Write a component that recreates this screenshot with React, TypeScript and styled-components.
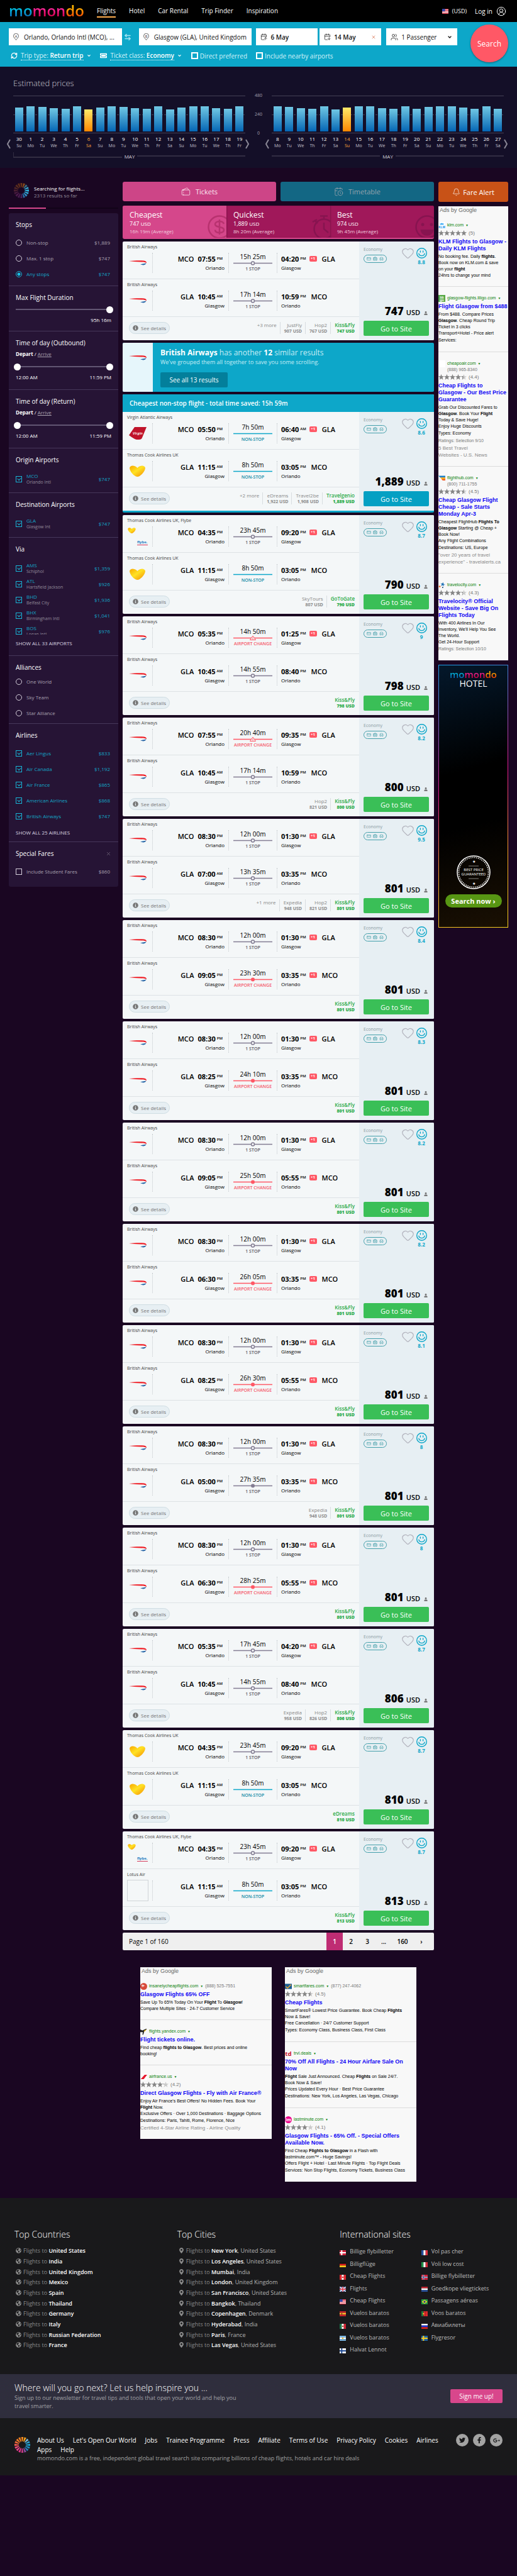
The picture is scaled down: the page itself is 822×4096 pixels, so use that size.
import React from "react";
import styled, { createGlobalStyle, css } from "styled-components";
import {
  ArrowLeftRight, Bell, CalendarArrowUp, CalendarArrowDown, CalendarClock, ChevronDown, Heart, RefreshCw,
  Tickets as TicketsIcon, Users, X, CircleUserRound, CreditCard, BriefcaseMedical, Armchair,
} from "lucide-react";
import {
  FaFacebookF, FaGlobeAmericas, FaGooglePlusG, FaInfoCircle, FaMapMarkerAlt, FaTicketAlt, FaTwitter, FaUser, FaPlane,
} from "react-icons/fa";

const sans = `"Open Sans", "Noto Sans", sans-serif`;
const arial = `"Liberation Sans", Arial, sans-serif`;

const GlobalStyle = createGlobalStyle`
  * { box-sizing: border-box; }
  body { margin: 0; background: #1a0622; font-family: ${sans}; font-size: 10px; color: #fff; }
  h1, h2, h3, p, ul { margin: 0; padding: 0; font-weight: 400; }
  ul { list-style: none; }
  a { color: inherit; text-decoration: none; }
  button, input, select { font-family: inherit; color: inherit; margin: 0; padding: 0; border: 0; background: none; }
  button { cursor: pointer; }
  svg { display: block; flex: none; }
`;

/* ---------- header ---------- */

const Header = styled.header`
  height: 35px;
  padding: 0 17px 0 14px;
  display: flex;
  background: #000;
`;
const Logo = styled.a`
  width: 120px;
  margin-right: 20px;
  font-size: 24px;
  line-height: 33px;
  font-weight: 600;
  display: flex;
`;
const LogoPart = styled.span<{ $from: string; $to: string }>`
  background: linear-gradient(${(p) => p.$from} 35%, ${(p) => p.$to} 75%);
  background-clip: text;
  -webkit-background-clip: text;
  color: transparent;
`;
const Nav = styled.nav`
  display: flex;
  gap: 21px;
  flex: 1;
`;
const NavLink = styled.a<{ $active?: boolean }>`
  height: 28px;
  padding-top: 10px;
  line-height: 14px;
  font-size: 10px;
  border-bottom: 2px solid ${(p) => (p.$active ? "#ffad4e" : "transparent")};
`;
const HeaderTools = styled.div`
  display: flex;
  align-items: center;
  gap: 6px;
`;
const Currency = styled.span`
  font-size: 9px;
  margin-right: 7px;
`;

/* ---------- search ---------- */

const SearchForm = styled.form`
  height: 71px;
  padding: 4px 14px 0;
  display: flex;
  gap: 21px;
  background: #0da7c9;
`;
const SearchMain = styled.div`
  flex: 1;
  padding-top: 6px;
`;
const Fields = styled.div`
  display: grid;
  grid-template-columns: 180fr 27px 180fr 7px 98fr 3px 98fr 8px 113fr;
`;
const Field = styled.label`
  height: 27px;
  padding: 0 8px 0 7px;
  display: flex;
  align-items: center;
  gap: 5px;
  background: #fff;
  color: #111;
  input, select { flex: 1; min-width: 0; width: 100%; font-size: 10px; appearance: none; outline: 0; }
`;
const PlaceField = styled(Field)`
  gap: 8px;
`;
const DateField = styled(Field)`
  input { font-weight: 600; }
`;
const Swap = styled.button`
  padding-left: 3px;
  color: #a5e3f2;
`;
const Options = styled.div`
  margin-top: 9px;
  padding-left: 3px;
  height: 15px;
  display: flex;
  align-items: center;
  font-size: 10px;
`;
const OptionPick = styled.label`
  margin: 0 5px 0 5px;
  line-height: 14px;
  color: #d6f3fa;
  border-bottom: 1px dotted #fff;
  select { appearance: none; font-size: 10px; font-weight: 600; color: #fff; outline: 0; }
`;
const OptionIcon = styled.span`
  margin-right: 14px;
`;
const OptionCheck = styled.label`
  margin-left: 1px;
  margin-right: 13px;
  display: flex;
  align-items: center;
  gap: 3px;
  color: #d6f3fa;
  input { appearance: none; width: 11px; height: 11px; border: 2px solid #fff; }
`;
const SearchButton = styled.button`
  width: 60px;
  height: 60px;
  border-radius: 50%;
  background: #ff5866;
  font-size: 12px;
  box-shadow: 0 1px 3px rgba(0, 0, 0, 0.4);
`;

/* ---------- price chart ---------- */

const ChartSection = styled.section`
  padding: 16px 10px 13px;
  background: #140f28;
`;
const ChartTitle = styled.h2`
  margin: 0 11px 10px;
  font-size: 13px;
  line-height: 20px;
  font-weight: 300;
  color: #c9c6cf;
`;
const Charts = styled.div`
  display: grid;
  grid-template-columns: 1fr 20px 1fr;
`;
const ChartPanel = styled.div`
  display: grid;
  grid-template-columns: 11px 1fr 11px;
`;
const Plot = styled.div`
  grid-column: 1 / -1;
  margin: 0 11px;
  height: 60px;
  padding-bottom: 2px;
  display: flex;
  align-items: flex-end;
  border-top: 1px solid #454155;
  border-bottom: 1px solid #454155;
  background: repeating-linear-gradient(90deg, #454155 0 3px, transparent 3px 5px) 0 29px / 100% 1px no-repeat;
`;
const BarSlot = styled.div`
  flex: 1;
  display: flex;
  justify-content: center;
`;
const Bar = styled.div<{ $on: boolean }>`
  width: 13px;
  background: ${(p) => (p.$on ? "linear-gradient(#ffe969, #ff8600)" : "linear-gradient(#70c7e4, #0566b4)")};
`;
const DayRow = styled.ul`
  padding-top: 2px;
  display: flex;
`;
const Day = styled.li<{ $on: boolean }>`
  flex: 1;
  text-align: center;
  font-size: 8px;
  line-height: 13px;
  color: ${(p) => (p.$on ? "#f9a33c" : "#fff")};
  small { display: block; font-size: 7px; line-height: 10px; color: ${(p) => (p.$on ? "#f9a33c" : "#c4c1cd")}; }
`;
const Arrow = styled.button`
  padding-top: 8px;
  color: #8b8896;
`;
const Month = styled.div<{ $tick?: boolean }>`
  grid-column: 2;
  margin-top: 5px;
  height: 12px;
  display: flex;
  align-items: center;
  gap: 4px;
  font-size: 8px;
  color: #d6d3dc;
  &::before, &::after { content: ""; flex: 1; height: 2px; background: #322d42; }
  ${(p) => p.$tick && css`&::before { height: 7px; margin-bottom: 4px; background: none; border-left: 1px solid #322d42; border-bottom: 2px solid #322d42; }`}
`;
const Axis = styled.div`
  height: 70px;
  margin-top: -5px;
  display: flex;
  flex-direction: column;
  justify-content: space-between;
  text-align: center;
  font-size: 7px;
  line-height: 10px;
  color: #a5a1ae;
`;

/* ---------- page columns ---------- */

const Columns = styled.main`
  padding: 22px 14px 0;
  display: grid;
  grid-template-columns: 174px 1fr 111px;
  gap: 7px;
  align-items: start;
`;

/* ---------- filters ---------- */

const Status = styled.div`
  height: 43px;
  padding: 2px 8px;
  display: flex;
  gap: 8px;
  font-size: 8px;
  line-height: 11px;
  p { padding-top: 3px; }
  small { display: block; font-size: 8px; color: #938b9a; }
`;
const Progress = styled.div`
  height: 2px;
  margin-bottom: 7px;
  margin-top: -2px;
  background: linear-gradient(90deg, #d4478a 34%, #120418 34%);
`;
const Panel = styled.div`
  border-radius: 3px;
  background: #261435;
`;
const Group = styled.section<{ $bottom: number }>`
  padding: 11px 11px ${(p) => p.$bottom}px;
  border-bottom: 1px solid #46375a;
  font-size: 8px;
  color: #a9a1b0;
  &:last-child { border-bottom: 0; }
`;
const GroupTitle = styled.h3<{ $gap: number }>`
  display: flex;
  justify-content: space-between;
  align-items: center;
  font-size: 10px;
  line-height: 14px;
  color: #fff;
  margin-bottom: ${(p) => p.$gap}px;
  svg { color: #8a8292; }
`;
const Choice = styled.label<{ $on?: boolean }>`
  height: 25px;
  padding-right: 2px;
  display: flex;
  align-items: center;
  gap: 7px;
  color: ${(p) => (p.$on ? "#14a5c6" : "#a9a1b0")};
  input { appearance: none; width: 10px; height: 10px; border: 1px solid #d5cfdb; position: relative; }
  input[type="radio"] { border-radius: 50%; }
  input:checked { border-color: #18b4d6; }
  input[type="radio"]:checked { background: radial-gradient(#18c0e4 0 2px, transparent 3px); }
  input[type="checkbox"]:checked::after {
    content: ""; position: absolute; left: 2px; top: 1px; width: 4px; height: 3px;
    border-left: 1px solid #18b4d6; border-bottom: 1px solid #18b4d6; transform: rotate(-45deg);
  }
`;
const ChoiceText = styled.span`
  flex: 1;
  line-height: 10px;
  white-space: nowrap;
  small { display: block; font-size: 7px; color: #938b9a; }
`;
const Clip = styled.div`
  height: 118px;
  overflow: hidden;
`;
const ShowAll = styled.button`
  display: block;
  margin-top: 8px;
  height: 12px;
  font-size: 8px;
  line-height: 12px;
  color: #dcd7e2;
`;
const DepartArrive = styled.p`
  line-height: 12px;
  margin-bottom: 8px;
  color: #fff;
  a { color: #a9a1b0; text-decoration: underline; }
`;
const Range = styled.div`
  height: 12px;
  margin: 0 -3px 5px;
  display: grid;
  background: linear-gradient(#625673, #625673) center / calc(100% - 6px) 2px no-repeat;
  input {
    grid-area: 1 / 1;
    width: 100%;
    appearance: none;
    pointer-events: none;
    &::-webkit-slider-thumb { appearance: none; width: 11px; height: 11px; border-radius: 50%; background: #fff; pointer-events: auto; }
  }
`;
const RangeLabels = styled.div<{ $end?: boolean }>`
  display: flex;
  justify-content: ${(p) => (p.$end ? "flex-end" : "space-between")};
  line-height: 12px;
  color: #fff;
`;

/* ---------- results ---------- */

const TabRow = styled.div`
  display: grid;
  grid-template-columns: 1fr 1fr;
  gap: 7px;
  margin-bottom: 7px;
`;
const Tab = styled.button<{ $bg: string; $color: string }>`
  height: 31px;
  display: flex;
  align-items: center;
  justify-content: center;
  gap: 8px;
  border-radius: 3px;
  font-size: 11px;
  background: ${(p) => p.$bg};
  color: ${(p) => p.$color};
`;
const SortRow = styled.div`
  height: 53px;
  display: grid;
  grid-template-columns: 1fr 1fr 1fr;
  border-radius: 3px;
  overflow: hidden;
  margin-bottom: 4px;
  background: #a0185a;
  border-bottom: 2px solid #d5478b;
`;
const SortTab = styled.button<{ $on?: boolean }>`
  position: relative;
  overflow: hidden;
  padding: 6px 11px 5px;
  text-align: left;
  font-size: 8px;
  line-height: 12px;
  color: #f0cddf;
  background: ${(p) => (p.$on ? "#d5478b" : "#a0185a")};
  box-shadow: inset 1px 0 2px ${(p) => (p.$on ? "#d5478b" : "#82134a")};
  h3 { font-size: 12px; line-height: 17px; color: #fff; }
  p { font-size: 9px; line-height: 12px; color: #fff; }
  p small { font-size: 8px; }
  > svg { position: absolute; right: -8px; top: 15px; }
`;
const Card = styled.article<{ $accent?: boolean }>`
  margin-bottom: 4px;
  display: grid;
  grid-template-columns: 1fr 119px;
  border-radius: 2px;
  overflow: hidden;
  background: #f4f7f8;
  color: #000;
  border-bottom: ${(p) => (p.$accent ? "3px solid #0da7c9" : "0")};
`;
const CardHead = styled.h2`
  grid-column: 1 / -1;
  height: 28px;
  padding-left: 11px;
  font-size: 10px;
  font-weight: 600;
  line-height: 28px;
  color: #fff;
  background: #0da7c9;
`;
const LegRow = styled.div`
  height: 60px;
  padding: 3px 0 9px;
  border-bottom: 1px solid #dde2e5;
`;
const Airline = styled.p`
  padding-left: 7px;
  margin-bottom: 4px;
  font-size: 7px;
  line-height: 11px;
  color: #444;
`;
const LegGrid = styled.div`
  height: 32px;
  display: grid;
  grid-template-columns: 48px 1fr 78px 130px;
`;
const LogoCell = styled.div`
  border-right: 1px dotted #c3c8cc;
  display: flex;
  justify-content: center;
  align-items: center;
  height: 32px;
`;
const Pair = styled.div`
  height: 28px;
  width: 32px;
  display: flex;
  flex-direction: column;
  justify-content: space-between;
`;
const Flybe = styled.span`
  align-self: flex-end;
  font: 700 6px/8px ${sans};
  color: #1e7cc0;
  border-bottom: 1px solid #d33a5c;
`;
const NoLogo = styled.div`
  width: 34px;
  height: 34px;
  border: 1px solid #cfd4d8;
`;
const End = styled.div<{ $right?: boolean }>`
  padding: ${(p) => (p.$right ? "0 6px 0 0" : "0 0 0 6px")};
  text-align: ${(p) => (p.$right ? "right" : "left")};
  font-size: 8px;
  line-height: 9px;
`;
const TimeLine = styled.div<{ $right?: boolean }>`
  height: 19px;
  display: flex;
  align-items: center;
  justify-content: ${(p) => (p.$right ? "flex-end" : "flex-start")};
  margin-right: ${(p) => (p.$right ? "3px" : "0")};
  font-size: 11px;
  line-height: 19px;
  b { margin-left: ${(p) => (p.$right ? "6px" : "0")}; }
  sup { font-size: 6px; line-height: 6px; font-weight: 600; margin: 0 0 2px 2px; vertical-align: 0; }
`;
const Code = styled.span<{ $after?: boolean }>`
  font-weight: 600;
  margin-left: ${(p) => (p.$after ? "8px" : "0")};
`;
const NextDay = styled.span`
  width: 12px;
  height: 9px;
  margin-left: 5px;
  border-radius: 2px;
  background: #ff5866;
  color: #fff;
  font-size: 6px;
  font-weight: 700;
  line-height: 9px;
  text-align: center;
`;
const Middle = styled.div<{ $color: string }>`
  padding: 0 7px;
  border-left: 1px dotted #c3c8cc;
  border-right: 1px dotted #c3c8cc;
  text-align: center;
  font-size: 10px;
  line-height: 12px;
  small { display: block; margin: 0 -4px; font-size: 7px; line-height: 9px; font-weight: 600; white-space: nowrap; color: ${(p) => p.$color}; }
`;
const CardFoot = styled.div`
  height: 37px;
  padding: 8px 7px 0 10px;
  display: flex;
`;
const Details = styled.button`
  width: 65px;
  height: 19px;
  display: flex;
  align-items: center;
  justify-content: center;
  gap: 4px;
  border: 1px solid #cfdde3;
  border-radius: 10px;
  background: #e7eff3;
  font-size: 8px;
  color: #777;
`;
const More = styled.span`
  margin-left: auto;
  font-size: 8px;
  line-height: 10px;
  color: #888;
`;
const Offer = styled.a<{ $best?: boolean; $first?: boolean }>`
  height: 19px;
  margin-left: 5px;
  padding-left: 6px;
  border-left: 1px solid ${(p) => (p.$first ? "transparent" : "#d8dde0")};
  text-align: right;
  font-size: 8px;
  line-height: 10px;
  font-weight: ${(p) => (p.$best ? 600 : 400)};
  color: ${(p) => (p.$best ? "#2bab49" : "#888")};
  b { display: block; font-size: 7px; }
`;
const Side = styled.div`
  padding: 8px 8px 7px 7px;
  display: flex;
  flex-direction: column;
  justify-content: space-between;
  background: #e7eff3;
`;
const SideTop = styled.div`
  display: grid;
  grid-template-columns: 1fr 20px 24px;
  font-size: 7px;
  line-height: 10px;
  color: #8b9ba3;
`;
const Perks = styled.div`
  width: 37px;
  height: 13px;
  margin-top: 3px;
  display: flex;
  justify-content: center;
  align-items: center;
  gap: 3px;
  border: 1px solid #45a0ab;
  border-radius: 7px;
  color: #45a0ab;
`;
const Score = styled.div`
  padding-top: 2px;
  display: flex;
  flex-direction: column;
  align-items: center;
  font-size: 8px;
  line-height: 12px;
  font-weight: 700;
  color: #0da7c9;
`;
const Price = styled.div`
  display: flex;
  justify-content: flex-end;
  align-items: baseline;
  gap: 4px;
  padding-right: 2px;
  font-size: 11px;
  line-height: 22px;
  font-weight: 600;
  b { font-size: 17px; }
  svg { margin-left: 2px; color: #777; }
`;
const GoButton = styled.button<{ $accent?: boolean }>`
  width: 100%;
  height: 24px;
  margin-top: 2px;
  border-radius: 2px;
  background: ${(p) => (p.$accent ? "#04a0c3" : "#3abf57")};
  color: #fff;
  font-size: 11px;
`;
const Banner = styled.section`
  height: 78px;
  margin-bottom: 4px;
  display: grid;
  grid-template-columns: 48px 1fr;
  border-radius: 2px;
  overflow: hidden;
  background: #0da7c9;
`;
const BannerLogo = styled.div`
  padding: 20px 10px;
  background: #e6f6fb;
`;
const BannerText = styled.div`
  padding: 7px 12px;
  font-size: 9px;
  line-height: 13px;
  color: #c8edf6;
  h3 { font-size: 12px; line-height: 17px; }
  b { color: #fff; }
`;
const BannerButton = styled.button`
  display: block;
  margin-top: 10px;
  width: 107px;
  height: 24px;
  border-radius: 2px;
  background: #037f9b;
  color: #fff;
  font-size: 10px;
`;
const Pager = styled.nav`
  height: 28px;
  padding: 0 7px 0 10px;
  display: flex;
  align-items: center;
  border-radius: 2px;
  background: #efefef;
  color: #000;
  font-size: 10px;
  span { flex: 1; }
`;
const PageLink = styled.a<{ $on?: boolean; $wide?: boolean }>`
  width: ${(p) => (p.$wide ? "34px" : "26px")};
  line-height: 28px;
  text-align: center;
  font-weight: 600;
  background: ${(p) => (p.$on ? "#bf2c73" : "none")};
  color: ${(p) => (p.$on ? "#fff" : "#000")};
`;

/* ---------- adverts ---------- */

const FareAlert = styled(Tab)`
  width: 100%;
  height: 32px;
  gap: 4px;
  margin-bottom: 7px;
`;
const AdBox = styled.aside`
  overflow: hidden;
  background: #f8f8f8;
  color: #000;
  font-family: ${arial};
  font-size: 7px;
  line-height: 10px;
`;
const AdsBy = styled.p`
  padding: 0 2px;
  font-size: 9px;
  line-height: 12px;
  color: #666;
`;
const Ad = styled.div`
  padding: 12px 0;
  white-space: nowrap;
  & + & { border-top: 1px solid #dcdcdc; }
`;
const AdUrl = styled.a`
  height: 12px;
  display: flex;
  align-items: center;
  gap: 3px;
  color: #0a820a;
  small { font-size: 5px; }
  em { font-style: normal; color: #777; }
`;
const AdPhone = styled.p`
  padding-left: 14px;
  margin-top: -1px;
  color: #777;
`;
const AdTitle = styled.a`
  display: block;
  margin: 2px 0;
  font-size: 9px;
  line-height: 11px;
  font-weight: 700;
  color: #1005f5;
`;
const AdExtra = styled.p`
  line-height: 12px;
`;
const AdRating = styled.p`
  line-height: 12px;
  color: #777;
`;
const AdQuote = styled.p`
  font-size: 8px;
  line-height: 11px;
  color: #888;
`;
const StarLine = styled.div`
  height: 13px;
  display: flex;
  align-items: center;
  gap: 3px;
  font-size: 8px;
  color: #777;
`;
const StarGroup = styled.span`
  display: flex;
`;
const AdPairRow = styled.div`
  padding: 27px 28px 26px;
  display: grid;
  grid-template-columns: 1fr 1fr;
  gap: 21px;
  align-items: start;
`;
const HotelAd = styled.a`
  margin-top: 7px;
  height: 418px;
  padding: 6px 9px 31px;
  display: flex;
  flex-direction: column;
  align-items: center;
  border: 1px solid;
  border-image: linear-gradient(160deg, #1aa0e8, #e01a8c 45%, #f7a823 75%, #f5d21f) 1;
  background: linear-gradient(165deg, #04182b, #000 40%, #000 60%, #1a1003);
  color: #fff;
`;
const HotelLogo = styled.div`
  display: flex;
  font-size: 15px;
  line-height: 16px;
  font-weight: 600;
`;
const HotelWord = styled.p`
  font-size: 14px;
  line-height: 14px;
  flex: 1;
`;
const SearchNow = styled.span`
  margin-top: 8px;
  width: 90px;
  height: 21px;
  border-radius: 11px;
  background: #579613;
  font-size: 11px;
  font-weight: 700;
  line-height: 21px;
  text-align: center;
`;

/* ---------- footer ---------- */

const Directory = styled.footer`
  padding: 48px 23px 30px;
  display: grid;
  grid-template-columns: 1fr 1fr 1fr;
  background: #19191b;
`;
const DirTitle = styled.h3`
  margin-bottom: 7px;
  font-size: 14px;
  line-height: 20px;
  font-weight: 300;
`;
const Place = styled.li`
  height: 17px;
  padding-left: 2px;
  display: flex;
  align-items: center;
  gap: 3px;
  font-size: 9px;
  color: #8b8b8b;
  &:nth-child(3n) { height: 16px; }
  svg { width: 9px; height: 9px; }
  b { font-weight: 600; color: #fff; }
  span { color: #b5b5b5; }
`;
const SiteCols = styled.div`
  display: grid;
  grid-template-columns: 1fr 1fr;
`;
const Site = styled.li`
  height: 19px;
  display: flex;
  align-items: center;
  gap: 6px;
  font-size: 9px;
  color: #bdbdbd;
  &:nth-child(even) { height: 20px; }
  svg { margin-top: 4px; }
`;
const Newsletter = styled.section`
  height: 70px;
  padding: 0 23px;
  display: flex;
  align-items: center;
  justify-content: space-between;
  background: #2f2e3d;
  h3 { font-size: 14px; line-height: 18px; font-weight: 300; }
  p { width: 45%; min-width: 360px; font-size: 9px; line-height: 13px; color: #a3a3a8; }
`;
const SignUp = styled.button`
  width: 83px;
  height: 22px;
  border-radius: 2px;
  background: #d8478c;
  font-size: 10px;
`;
const BaseFooter = styled.section`
  height: 91px;
  padding: 24px 23px;
  display: grid;
  grid-template-columns: 36px 1fr auto;
  background: #19191b;
  > svg { margin-top: 6px; }
`;
const BaseLinks = styled.ul`
  display: flex;
  flex-wrap: wrap;
  column-gap: 14px;
  margin-top: 4px;
  font-size: 10px;
  line-height: 15px;
`;
const Tagline = styled.p`
  font-size: 9px;
  line-height: 12px;
  color: #a3a3a3;
`;
const Social = styled.div`
  display: flex;
  gap: 7px;
  margin-top: 1px;
  a { width: 20px; height: 20px; display: grid; place-items: center; border-radius: 50%; background: #a3a3a3; color: #19191b; }
`;

/* ---------- drawings ---------- */

const Wordmark = () => (
  <>
    <LogoPart $from="#00c9e8" $to="#0a70b8">mo</LogoPart>
    <LogoPart $from="#ff2ba0" $to="#d6004f">mon</LogoPart>
    <LogoPart $from="#ffb400" $to="#f54a00">do</LogoPart>
  </>
);

const Burst = ({ size, colors }: { size: number; colors: string[] }) => (
  <svg width={size} height={size} viewBox="0 0 32 32" aria-hidden="true">
    {colors.map((c, i) => (
      <path key={i} d="M15.200 9L13.800 0h4.400L16.800 9z" fill={c} transform={`rotate(${(360 / colors.length) * i} 16 16)`} />
    ))}
  </svg>
);
const brightRays = ["#f58a1f", "#f7a31f", "#7fb8d6", "#2aa6d4", "#1ba0d0", "#1c8fc4", "#2c7ab8", "#8a4d9e", "#c73a86", "#e0378a", "#e8418a", "#ee4a7a", "#ef5a50", "#f06a3a", "#f27a28", "#f58220"];
const dimRays = ["#6b3518", "#8a4a1c", "#3c6f82", "#35a5cc", "#2fb4dc", "#2fa9d6", "#2b8fc4", "#286fa8", "#45245a", "#4a1d50", "#4d1a4c", "#481a3e", "#4a1f30", "#502626", "#5a2c1e", "#63301a"];

const BritishLogo = () => (
  <svg width="28" height="8" viewBox="0 0 28 8">
    <path d="M0 1C9 .2 18 0 24 .5 27 .9 28 2.4 28 4.2 26.6 2.9 24 2.6 20 2.5 12 2.4 5 1.9 0 1z" fill="#ef1c24" />
    <path d="M18 6.3L27.7 4.4C26.5 6.2 24.6 7.4 22.6 7.6z" fill="#2463a5" />
  </svg>
);
const CookLogo = ({ small }: { small?: boolean }) => (
  <svg width={small ? 13 : 25} height={small ? 9 : 18} viewBox="0 0 25 18">
    <defs>
      <linearGradient id="cook" x1="0" y1="0" x2="1" y2="1">
        <stop offset="0" stopColor="#f9a800" /><stop offset=".45" stopColor="#ffe224" /><stop offset="1" stopColor="#f58a00" />
      </linearGradient>
    </defs>
    <path d="M0 4C1 0 7-1 12.5 4 18-1 24 0 25 4 24.500 10 18 16 15 17.500 13 18.200 12 18.200 10 17.500 6 15.500.5 10 0 4z" fill="url(#cook)" />
  </svg>
);
const VirginLogo = () => (
  <svg width="28" height="20" viewBox="0 0 28 20">
    <path d="M9 0h19l-7 17q-1 3-5 3h-4Q8 19 0 13z" fill="#c0142a" />
    <text x="6" y="12" fontSize="6" fontStyle="italic" fontWeight="600" fontFamily={sans} fill="#fff">Virgin</text>
  </svg>
);
const Smiley = () => (
  <svg width="17" height="17" viewBox="0 0 24 24" fill="none" stroke="currentColor" strokeWidth="2" strokeLinecap="round">
    <circle cx="12" cy="12" r="11" />
    <path d="M9 7v3M15 7v3M5.500 13c1 6.500 12 6.500 13 0" />
  </svg>
);
const CoinMark = () => (
  <svg width="38" height="38" viewBox="0 0 38 38" fill="none" stroke="#b8326f" strokeWidth="2.500">
    <circle cx="19" cy="19" r="17.500" />
    <path d="M26 14c-1-3-4-4-7-4-4 0-7 2-7 4.500 0 6 14 3 14 9 0 3-3 4.500-7 4.500s-7-1.500-7-4.500M19 7v24" />
  </svg>
);
const WatchMark = () => (
  <svg width="38" height="38" viewBox="0 0 38 38" fill="none" stroke="#871450" strokeWidth="2.500">
    <circle cx="20" cy="22" r="15.500" /><path d="M20 6V1.500M14 1.500h12M20 12v10l7 6M2 11l7-4M5 8l5 5" />
  </svg>
);
const GrinMark = () => (
  <svg width="38" height="38" viewBox="0 0 38 38" fill="none" stroke="#871450" strokeWidth="2.500">
    <circle cx="19" cy="19" r="17.500" />
    <path d="M8.500 23h21c-1 13-20 13-21 0z" fill="#871450" stroke="none" />
    <circle cx="12" cy="15" r="2.500" fill="#871450" stroke="none" /><circle cx="26" cy="15" r="2.500" fill="#871450" stroke="none" />
  </svg>
);
const Seal = () => (
  <svg width="54" height="54" viewBox="0 0 54 54" fill="none" stroke="#fff">
    <circle cx="27" cy="27" r="26" strokeWidth="1.500" />
    <circle cx="27" cy="27" r="23.500" strokeWidth="1.500" strokeDasharray="1.500 1.500" />
    <path d="M19 17h16M19 37h16" strokeWidth=".5" />
    <g fill="#fff" stroke="none" fontFamily={sans} textAnchor="middle">
      <text x="27" y="12" fontSize="6">★</text>
      <text x="27" y="25" fontSize="6">BEST PRICE</text>
      <text x="27" y="32" fontSize="6">GUARANTEED</text>
      <text x="27" y="47" fontSize="6">★</text>
    </g>
  </svg>
);
const PinLetter = ({ letter }: { letter: string }) => (
  <svg width="9" height="11" viewBox="0 0 18 22" fill="none" stroke="#333" strokeWidth="1.500">
    <path d="M9 21C5 16 1 13 1 8.500a8 8 0 0 1 16 0C17 13 13 16 9 21z" />
    <text x="9" y="13" fontSize="11" textAnchor="middle" fill="#333" stroke="none" fontFamily={sans}>{letter}</text>
  </svg>
);
const Chevron = ({ right }: { right?: boolean }) => (
  <svg width="7" height="16" viewBox="0 0 7 16" fill="none" stroke="currentColor" strokeWidth="2">
    <path d={right ? "M1 1l4 7-4 7" : "M6 1L2 8l4 7"} />
  </svg>
);

type Kind = "stop" | "dot" | "non" | "tri" | "reddot";
const kindColor: Record<Kind, string> = { stop: "#837d93", dot: "#837d93", non: "#0da7c9", tri: "#ff5866", reddot: "#ff5866" };
const kindText: Record<Kind, string> = { stop: "#5d5a66", dot: "#5d5a66", non: "#118aa5", tri: "#f4596a", reddot: "#f4596a" };
const kindLabel: Record<Kind, string> = { stop: "1 STOP", dot: "1 STOP", non: "NON-STOP", tri: "AIRPORT CHANGE", reddot: "AIRPORT CHANGE" };
const Track = ({ kind }: { kind: Kind }) => (
  <svg width="62" height="9" viewBox="0 0 62 9" fill="none" stroke={kindColor[kind]}>
    <path d="M0 4.500h62" strokeWidth="1.500" />
    {kind === "stop" && <circle cx="31" cy="4.500" r="2.500" fill="#f4f7f8" strokeWidth="1.500" />}
    {(kind === "dot" || kind === "reddot") && <circle cx="31" cy="4.500" r="3" fill={kindColor[kind]} stroke="none" />}
    {kind === "tri" && <path d="M26.500 7.500L31 1l4.500 6.500zM31 3.500v3" fill="#f4f7f8" />}
  </svg>
);

const starPath = "M5 0l1.300 3.600H10L7.100 5.900 8.200 9.600 5 7.400 1.800 9.600 2.900 5.900 0 3.600h3.700z";
const Star = ({ fill }: { fill: number }) => (
  <svg width="9" height="9" viewBox="0 0 10 10">
    <path d={starPath} fill="#c9c9c9" />
    <path d={starPath} fill="#858585" style={fill < 1 ? { clipPath: `inset(0 ${(1 - fill) * 100}% 0 0)` } : undefined} />
  </svg>
);
const Stars = ({ value }: { value: number }) => (
  <StarLine>
    <StarGroup>{[0, 1, 2, 3, 4].map((i) => <Star key={i} fill={Math.max(0, Math.min(1, value - i))} />)}</StarGroup>
    ({value})
  </StarLine>
);

const Favicon = ({ kind }: { kind: string }) => (
  <svg width="11" height="11" viewBox="0 0 16 16">
    {kind === "klm" && <><rect width="16" height="16" fill="#fff" /><path d="M4 6h8l.5-3-2 1L8 2 5.500 4l-2-1z" fill="#2aa4f4" /><text x="8" y="14" fontSize="7" fontWeight="900" textAnchor="middle" fill="#0a8ee8" fontFamily={arial}>KLM</text></>}
    {kind === "liligo" && <><rect width="16" height="16" fill="#56a846" /><text x="8" y="8" fontSize="8" fontWeight="700" textAnchor="middle" fill="#fff" fontFamily={arial}>lili</text><text x="8" y="14" fontSize="8" fontWeight="700" textAnchor="middle" fill="#fff" fontFamily={arial}>go</text></>}
    {kind === "blank" && <rect width="16" height="16" fill="#fff" />}
    {kind === "hub" && <><path d="M0 2h16v4H4z" fill="#1b7fc4" /><path d="M4 6h12v4H8z" fill="#f9a51a" /><path d="M7 10h9v3h-6z" fill="#f05a22" /></>}
    {kind === "travelocity" && <><path d="M11 1l1 4 4 1-4 1 1 4-3-3-4 2 2-4-3-2 4 0z" fill="#1b6fb5" /><circle cx="3" cy="11" r="2" fill="#f26a21" /><circle cx="10" cy="13" r="1.500" fill="#123e6b" /></>}
    {kind === "cheap" && <><circle cx="8" cy="8" r="8" fill="#d84a3a" /><FaPlane x="3" y="3" width="10" height="10" color="#fff" /></>}
    {kind === "yandex" && <><path d="M0 3l5 2L14 1l1 1-6 6-2 7H5l1-6-6 0z" fill="#222" /><path d="M8 6l7-4-5 6z" fill="#f9c21a" /></>}
    {kind === "france" && <><rect width="16" height="16" fill="#fff" /><path d="M1 13L10 3h6l-8 10z" fill="#e5182d" /></>}
    {kind === "smart" && <><rect y="2" width="16" height="12" fill="#1d5f94" /><path d="M2 8l4 4 8-8" stroke="#f4a52a" strokeWidth="2" fill="none" /></>}
    {kind === "td" && <text x="8" y="13" fontSize="14" fontWeight="700" textAnchor="middle" fill="#c8102e" fontFamily={sans}>td</text>}
    {kind === "lm" && <><circle cx="8" cy="8" r="8" fill="#ec008c" /><text x="8" y="12" fontSize="10" fontWeight="700" textAnchor="middle" fill="#fff" fontFamily={sans}>lm</text></>}
  </svg>
);

const stripes: Record<string, [("v" | "h"), string[]]> = {
  de: ["h", ["#111", "#dd1c1c", "#f8c81c"]], es: ["h", ["#c8202c", "#f9c22c", "#c8202c"]], mx: ["v", ["#17764a", "#fff", "#cf2030"]],
  ar: ["h", ["#7ab8e6", "#fff", "#7ab8e6"]], fr: ["v", ["#2450a0", "#fff", "#e03040"]], it: ["v", ["#1d9448", "#fff", "#d42c3a"]],
  nl: ["h", ["#c02430", "#fff", "#27509a"]], pt: ["v", ["#1d7a3c", "#d8282c", "#d8282c"]], ru: ["h", ["#fff", "#1a35d8", "#d8201c"]],
  ca: ["v", ["#e0242c", "#fff", "#e0242c"]],
};
const emblems: Record<string, [number, string]> = {
  mx: [7.5, "#9a5a2a"], ar: [7.5, "#f2c230"], es: [5, "#9a5a2a"], ca: [7.5, "#e0242c"], pt: [5, "#f2c230"],
};
const crosses: Record<string, [string, string, string?]> = {
  dk: ["#d0243c", "#fff"], fi: ["#fff", "#204a94"], se: ["#1e66a8", "#f8cc1c"], no: ["#d0243c", "#fff", "#1e3a80"],
};
const Flag = ({ code }: { code: string }) => (
  <svg width="10" height="8" viewBox="0 0 15 12">
    {stripes[code] && stripes[code][1].map((c, i) => stripes[code][0] === "v"
      ? <rect key={i} x={i * 5} width="5" height="12" fill={c} />
      : <rect key={i} y={i * 4} width="15" height="4" fill={c} />)}
    {emblems[code] && <circle cx={emblems[code][0]} cy="6" r="1.800" fill={emblems[code][1]} />}
    {crosses[code] && <><rect width="15" height="12" fill={crosses[code][0]} /><path d="M0 6h15M5 0v12" stroke={crosses[code][1]} strokeWidth={3} />{crosses[code][2] && <path d="M0 6h15M5 0v12" stroke={crosses[code][2]} strokeWidth={1.5} />}</>}
    {code === "us" && <><rect width="15" height="12" fill="#fff" /><path d="M0 1h15M0 4h15M0 7.500h15M0 11h15" stroke="#d8263a" strokeWidth="1.700" /><rect width="7" height="6" fill="#3548a8" /></>}
    {code === "gb" && <><rect width="15" height="12" fill="#25408f" /><path d="M0 0l15 12M15 0L0 12" stroke="#fff" strokeWidth="2" /><path d="M0 6h15M7.500 0v12" stroke="#fff" strokeWidth="4" /><path d="M0 6h15M7.500 0v12" stroke="#d8263a" strokeWidth="2" /></>}
    {code === "br" && <><rect width="15" height="12" fill="#229a45" /><path d="M1 6l6.500-5L14 6l-6.500 5z" fill="#f8d820" /><circle cx="7.500" cy="6" r="2.500" fill="#25408f" /></>}
  </svg>
);

/* ---------- data ---------- */

const wk = ["Su", "Mo", "Tu", "We", "Th", "Fr", "Sa"];
const outbound = { heights: [38, 40, 39, 37, 36, 40, 35, 38, 40, 39, 37, 36, 40, 35, 38, 40, 40, 37, 36, 40], first: 30, wrap: 30, weekday: 0, on: 6 };
const inbound = { heights: [40, 39, 37, 36, 40, 35, 38, 40, 40, 37, 36, 40, 36, 39, 40, 40, 38, 36, 40, 36], first: 8, wrap: 31, weekday: 1, on: 6 };

type Leg = [airline: string, time: string, ap: string, dur: string, kind: Kind, time2: string, ap2: string, plus: boolean];
type Trip = { out: Leg; back: Leg; price: string; score: string; offers: [string, string][]; more?: string; head?: string };
const BA = "British Airways", TC = "Thomas Cook Airlines UK", TF = "Thomas Cook Airlines UK, Flybe";
const ba0: Leg = [BA, "08:30", "PM", "12h 00m", "stop", "01:30", "PM", true];
const tcBack: Leg = [TC, "11:15", "AM", "8h 50m", "non", "03:05", "PM", false];
const kiss = (p: string): [string, string] => ["Kiss&Fly", p];

const firstTrip: Trip = { out: [BA, "07:55", "PM", "15h 25m", "stop", "04:20", "PM", true], back: [BA, "10:45", "AM", "17h 14m", "stop", "10:59", "PM", false], price: "747", score: "8.8", more: "+3 more", offers: [["JustFly", "907"], ["Hop2", "767"], kiss("747")] };
const trips: Trip[] = [
  { head: "Cheapest non-stop flight - total time saved: 15h 59m", out: ["Virgin Atlantic Airways", "05:50", "PM", "7h 50m", "non", "06:40", "AM", true], back: tcBack, price: "1,889", score: "8.6", more: "+2 more", offers: [["eDreams", "1,922"], ["Travel2be", "1,908"], ["Travelgenio", "1,889"]] },
  { out: [TF, "04:35", "PM", "23h 45m", "stop", "09:20", "PM", true], back: tcBack, price: "790", score: "8.7", offers: [["SkyTours", "807"], ["GoToGate", "790"]] },
  { out: [BA, "05:35", "PM", "14h 50m", "tri", "01:25", "PM", true], back: [BA, "10:45", "AM", "14h 55m", "stop", "08:40", "PM", false], price: "798", score: "9", offers: [kiss("798")] },
  { out: [BA, "07:55", "PM", "20h 40m", "tri", "09:35", "PM", true], back: [BA, "10:45", "AM", "17h 14m", "stop", "10:59", "PM", false], price: "800", score: "8.2", offers: [["Hop2", "821"], kiss("800")] },
  { out: ba0, back: [BA, "07:00", "AM", "13h 35m", "stop", "03:35", "PM", false], price: "801", score: "9.5", more: "+1 more", offers: [["Expedia", "948"], ["Hop2", "821"], kiss("801")] },
  { out: ba0, back: [BA, "09:05", "PM", "23h 30m", "reddot", "03:35", "PM", true], price: "801", score: "8.4", offers: [kiss("801")] },
  { out: ba0, back: [BA, "08:25", "PM", "24h 10m", "reddot", "03:35", "PM", true], price: "801", score: "8.3", offers: [kiss("801")] },
  { out: ba0, back: [BA, "09:05", "PM", "25h 50m", "reddot", "05:55", "PM", true], price: "801", score: "8.2", offers: [kiss("801")] },
  { out: ba0, back: [BA, "06:30", "PM", "26h 05m", "reddot", "03:35", "PM", true], price: "801", score: "8.2", offers: [kiss("801")] },
  { out: ba0, back: [BA, "08:25", "PM", "26h 30m", "reddot", "05:55", "PM", true], price: "801", score: "8.1", offers: [kiss("801")] },
  { out: ba0, back: [BA, "05:00", "PM", "27h 35m", "dot", "03:35", "PM", true], price: "801", score: "8", offers: [["Expedia", "948"], kiss("801")] },
  { out: ba0, back: [BA, "06:30", "PM", "28h 25m", "reddot", "05:55", "PM", true], price: "801", score: "8", offers: [kiss("801")] },
  { out: [BA, "05:35", "PM", "17h 45m", "stop", "04:20", "PM", true], back: [BA, "10:45", "AM", "14h 55m", "stop", "08:40", "PM", false], price: "806", score: "8.7", offers: [["Expedia", "958"], ["Hop2", "826"], kiss("806")] },
  { out: [TC, "04:35", "PM", "23h 45m", "stop", "09:20", "PM", true], back: tcBack, price: "810", score: "8.7", offers: [["eDreams", "810"]] },
  { out: [TF, "04:35", "PM", "23h 45m", "stop", "09:20", "PM", true], back: ["Lotus Air", "11:15", "AM", "8h 50m", "non", "03:05", "PM", false], price: "813", score: "8.7", offers: [kiss("813")] },
];

/* ---------- parts ---------- */

const Chart = ({ data, tick }: { data: typeof outbound; tick?: boolean }) => (
  <ChartPanel>
    <Plot>
      {data.heights.map((h, i) => <BarSlot key={i}><Bar $on={i === data.on} style={{ height: h }} /></BarSlot>)}
    </Plot>
    <Arrow type="button" aria-label="Earlier dates"><Chevron /></Arrow>
    <DayRow>
      {data.heights.map((_, i) => {
        const d = data.first + i;
        return <Day key={i} $on={i === data.on}>{d > data.wrap ? d - data.wrap : d}<small>{wk[(data.weekday + i) % 7]}</small></Day>;
      })}
    </DayRow>
    <Arrow type="button" aria-label="Later dates"><Chevron right /></Arrow>
    <Month $tick={tick}>MAY</Month>
  </ChartPanel>
);

const AirlineMark = ({ name }: { name: string }) => {
  if (name === BA) return <BritishLogo />;
  if (name === TC) return <CookLogo />;
  if (name === TF) return <Pair><CookLogo small /><Flybe>flybe.</Flybe></Pair>;
  if (name === "Lotus Air") return <NoLogo />;
  return <VirginLogo />;
};

const LegView = ({ leg, back }: { leg: Leg; back?: boolean }) => {
  const [name, t1, a1, dur, kind, t2, a2, plus] = leg;
  const [from, fromCity, to, toCity] = back ? ["GLA", "Glasgow", "MCO", "Orlando"] : ["MCO", "Orlando", "GLA", "Glasgow"];
  return (
    <LegRow>
      <Airline>{name}</Airline>
      <LegGrid>
        <LogoCell><AirlineMark name={name} /></LogoCell>
        <End $right>
          <TimeLine $right><Code>{from}</Code><b>{t1}</b><sup>{a1}</sup></TimeLine>
          {fromCity}
        </End>
        <Middle $color={kindText[kind]}>{dur}<Track kind={kind} /><small>{kindLabel[kind]}</small></Middle>
        <End>
          <TimeLine><b>{t2}</b><sup>{a2}</sup>{plus && <NextDay>+1</NextDay>}<Code $after>{to}</Code></TimeLine>
          {toCity}
        </End>
      </LegGrid>
    </LegRow>
  );
};

const TripCard = ({ trip }: { trip: Trip }) => (
  <Card $accent={!!trip.head}>
    {trip.head && <CardHead>{trip.head}</CardHead>}
    <div>
      <LegView leg={trip.out} />
      <LegView leg={trip.back} back />
      <CardFoot>
        <Details type="button"><FaInfoCircle size={9} />See details</Details>
        <More>{trip.more}</More>
        {trip.offers.map(([n, p], i) => (
          <Offer key={n} href="#" $first={i === 0 && !trip.more} $best={i === trip.offers.length - 1}>{n}<b>{p} USD</b></Offer>
        ))}
      </CardFoot>
    </div>
    <Side>
      <SideTop>
        <div>Economy<Perks><CreditCard size={7} /><BriefcaseMedical size={7} /><Armchair size={7} /></Perks></div>
        <Heart size={21} strokeWidth={1.4} color="#b4b5bf" />
        <Score><Smiley />{trip.score}</Score>
      </SideTop>
      <div>
        <Price><b>{trip.price}</b>USD<FaUser size={6} /></Price>
        <GoButton type="button" $accent={!!trip.head}>Go to Site</GoButton>
      </div>
    </Side>
  </Card>
);

const Check = ({ label, sub, price, on = true }: { label: string; sub?: string; price: string; on?: boolean }) => (
  <Choice $on={on}>
    <input type="checkbox" defaultChecked={on} />
    <ChoiceText>{label}{sub && <small>{sub}</small>}</ChoiceText>
    {price}
  </Choice>
);

const TimeGroup = ({ title }: { title: string }) => (
  <Group $bottom={13}>
    <GroupTitle $gap={5}>{title}</GroupTitle>
    <DepartArrive><b>Depart</b> / <a href="#">Arrive</a></DepartArrive>
    <Range>
      <input type="range" aria-label={`${title} from`} defaultValue={0} />
      <input type="range" aria-label={`${title} to`} defaultValue={100} />
    </Range>
    <RangeLabels><span>12:00 AM</span><span>11:59 PM</span></RangeLabels>
  </Group>
);

const Url = ({ icon, site, phone }: { icon: string; site: string; phone?: string }) => (
  <AdUrl href="#"><Favicon kind={icon} />{site} <small>▼</small>{phone && <em>{phone}</em>}</AdUrl>
);

const Filters = () => (
  <aside>
    <Status>
      <Burst size={24} colors={dimRays} />
      <p>Searching for flights...<small>2313 results so far</small></p>
    </Status>
    <Progress />
    <Panel>
      <Group $bottom={6}>
        <GroupTitle $gap={9}>Stops</GroupTitle>
        {[["Non-stop", "$1,889"], ["Max. 1 stop", "$747"], ["Any stops", "$747"]].map(([l, p], i) => (
          <Choice key={l} $on={i === 2}><input type="radio" name="stops" defaultChecked={i === 2} /><ChoiceText>{l}</ChoiceText>{p}</Choice>
        ))}
      </Group>
      <Group $bottom={11}>
        <GroupTitle $gap={6}>Max Flight Duration</GroupTitle>
        <Range><input type="range" aria-label="Max flight duration" defaultValue={100} /></Range>
        <RangeLabels $end><span>95h 16m</span></RangeLabels>
      </Group>
      <TimeGroup title="Time of day (Outbound)" />
      <TimeGroup title="Time of day (Return)" />
      <Group $bottom={9}>
        <GroupTitle $gap={11}>Origin Airports</GroupTitle>
        <Check label="MCO" sub="Orlando Intl" price="$747" />
      </Group>
      <Group $bottom={9}>
        <GroupTitle $gap={11}>Destination Airports</GroupTitle>
        <Check label="GLA" sub="Glasgow Int" price="$747" />
      </Group>
      <Group $bottom={13}>
        <GroupTitle $gap={11}>Via</GroupTitle>
        <Clip>
          <Check label="AMS" sub="Schiphol" price="$1,359" />
          <Check label="ATL" sub="Hartsfield Jackson" price="$926" />
          <Check label="BHD" sub="Belfast City" price="$1,936" />
          <Check label="BHX" sub="Birmingham Intl" price="$1,041" />
          <Check label="BOS" sub="Logan Intl" price="$976" />
        </Clip>
        <ShowAll type="button">SHOW ALL 33 AIRPORTS</ShowAll>
      </Group>
      <Group $bottom={4}>
        <GroupTitle $gap={3}>Alliances</GroupTitle>
        {["One World", "Sky Team", "Star Alliance"].map((l) => (
          <Choice key={l}><input type="radio" name="alliance" /><ChoiceText>{l}</ChoiceText></Choice>
        ))}
      </Group>
      <Group $bottom={8}>
        <GroupTitle $gap={9}>Airlines</GroupTitle>
        <Check label="Aer Lingus" price="$833" />
        <Check label="Air Canada" price="$1,192" />
        <Check label="Air France" price="$865" />
        <Check label="American Airlines" price="$868" />
        <Check label="British Airways" price="$747" />
        <ShowAll type="button">SHOW ALL 25 AIRLINES</ShowAll>
      </Group>
      <Group $bottom={12}>
        <GroupTitle $gap={9}>Special Fares<X size={9} strokeWidth={1.5} /></GroupTitle>
        <Check label="Include Student Fares" price="$860" on={false} />
      </Group>
    </Panel>
  </aside>
);

const SideAds = () => (
  <div>
    <FareAlert type="button" $bg="#c85217" $color="#fff"><Bell size={13} strokeWidth={1.3} />Fare Alert</FareAlert>
    <AdBox>
      <AdsBy>Ads by Google</AdsBy>
      <Ad>
        <Url icon="klm" site="klm.com" />
        <Stars value={5} />
        <AdTitle href="#">KLM Flights to Glasgow -<br />Daily KLM Flights</AdTitle>
        <p>No booking fee. Daily <b>flights</b>.<br />Book now on KLM.com &amp; save<br />on your <b>flight</b><br />24hrs to change your mind</p>
      </Ad>
      <Ad>
        <Url icon="liligo" site="glasgow-flights.liligo.com" />
        <AdTitle href="#">Flight Glasgow from $488</AdTitle>
        <p>From $488. Compare Prices<br /><b>Glasgow</b>. Cheap Round Trip<br />Ticket in 3 clicks<br />Transport+Hotel - Price alert</p>
        <AdExtra>Services:</AdExtra>
      </Ad>
      <Ad>
        <Url icon="blank" site="cheapoair.com" />
        <AdPhone>(888) 965-8340</AdPhone>
        <Stars value={4.4} />
        <AdTitle href="#">Cheap Flights to<br />Glasgow - Our Best Price<br />Guarantee</AdTitle>
        <p>Grab Our Discounted Fares to<br /><b>Glasgow</b>. Book Your <b>Flight</b><br />Today &amp; Save Huge!<br />Enjoy Huge Discounts</p>
        <AdExtra>Types: Economy</AdExtra>
        <AdRating>Ratings: Selection 9/10</AdRating>
        <AdQuote>5 Best Travel<br />Websites - U.S. News</AdQuote>
      </Ad>
      <Ad>
        <Url icon="hub" site="flighthub.com" />
        <AdPhone>(800) 711-1755</AdPhone>
        <Stars value={4.5} />
        <AdTitle href="#">Cheap Glasgow Flight<br />Cheap - Sale Starts<br />Monday Apr-3</AdTitle>
        <p>Cheapest FlightHub <b>Flights To</b><br /><b>Glasgow</b> Starting @ Cheap +<br />Book Now!<br />Any Flight Combinations</p>
        <AdExtra>Destinations: US, Europe</AdExtra>
        <AdQuote>"over 20 years of travel<br />experience" - travelalerts.ca</AdQuote>
      </Ad>
      <Ad>
        <Url icon="travelocity" site="travelocity.com" />
        <Stars value={4.3} />
        <AdTitle href="#">Travelocity® Official<br />Website - Save Big On<br />Flights Today</AdTitle>
        <p>With 400 Airlines In Our<br />Inventory, We'll Help You See<br />The World.<br />Get 24-Hour Support</p>
        <AdRating>Ratings: Selection 10/10</AdRating>
      </Ad>
    </AdBox>
    <HotelAd href="#">
      <HotelLogo><Wordmark /></HotelLogo>
      <HotelWord>HOTEL</HotelWord>
      <Seal />
      <SearchNow>Search now ›</SearchNow>
    </HotelAd>
  </div>
);

const BottomAds = () => (
  <AdPairRow>
    <AdBox>
      <AdsBy>Ads by Google</AdsBy>
      <Ad>
        <Url icon="cheap" site="insanelycheapflights.com" phone="(888) 525-7551" />
        <AdTitle href="#">Glasgow Flights 65% OFF</AdTitle>
        <p>Save Up To 65% Today On Your <b>Flight</b> To <b>Glasgow</b>!<br />Compare Multiple Sites · 24-7 Customer Service</p>
      </Ad>
      <Ad>
        <Url icon="yandex" site="flights.yandex.com" />
        <AdTitle href="#">Flight tickets online.</AdTitle>
        <p>Find cheap <b>flights to Glasgow</b>. Best prices and online<br />booking!</p>
      </Ad>
      <Ad>
        <Url icon="france" site="airfrance.us" />
        <Stars value={4.2} />
        <AdTitle href="#">Direct Glasgow Flights - Fly with Air France®</AdTitle>
        <p>Enjoy Air France's Best Offers! No Hidden Fees. Book Your<br /><b>Flight</b> Now.<br />Exclusive Offers · Over 1,000 Destinations · Baggage Options</p>
        <AdExtra>Destinations: Paris, Tahiti, Rome, Florence, Nice</AdExtra>
        <AdQuote>Certified 4-Star Airline Rating - Airline Quality</AdQuote>
      </Ad>
    </AdBox>
    <AdBox>
      <AdsBy>Ads by Google</AdsBy>
      <Ad>
        <Url icon="smart" site="smartfares.com" phone="(877) 247-4062" />
        <Stars value={4.5} />
        <AdTitle href="#">Cheap Flights</AdTitle>
        <p>SmartFares® Lowest Price Guarantee. Book Cheap <b>Flights</b><br />Now &amp; Save!<br />Free Cancellation · 24/7 Customer Support</p>
        <AdExtra>Types: Economy Class, Business Class, First Class</AdExtra>
      </Ad>
      <Ad>
        <Url icon="td" site="trvl.deals" />
        <AdTitle href="#">70% Off All Flights - 24 Hour Airfare Sale On<br />Now</AdTitle>
        <p><b>Flight</b> Sale Just Announced. Cheap <b>Flights</b> on Sale 24/7.<br />Book Now &amp; Save!<br />Prices Updated Every Hour · Best Price Guarantee</p>
        <AdExtra>Destinations: New York, Los Angeles, Las Vegas, Chicago</AdExtra>
      </Ad>
      <Ad>
        <Url icon="lm" site="lastminute.com" />
        <Stars value={4.1} />
        <AdTitle href="#">Glasgow Flights - 65% Off. - Special Offers<br />Available Now.</AdTitle>
        <p>Find Cheap <b>Flights to Glasgow</b> in a Flash with<br />lastminute.com™ - Huge Savings!<br />Offers Flight + Hotel · Last Minute Flights · Top Flight Deals</p>
        <AdExtra>Services: Non Stop Flights, Economy Tickets, Business Class</AdExtra>
      </Ad>
    </AdBox>
  </AdPairRow>
);

const countries = ["United States", "India", "United Kingdom", "Mexico", "Spain", "Thailand", "Germany", "Italy", "Russian Federation", "France"];
const cities = [["New York", "United States"], ["Los Angeles", "United States"], ["Mumbai", "India"], ["London", "United Kingdom"], ["San Francisco", "United States"], ["Bangkok", "Thailand"], ["Copenhagen", "Denmark"], ["Hyderabad", "India"], ["Paris", "France"], ["Las Vegas", "United States"]];
const sites = [
  [["dk", "Billige flybilletter"], ["de", "Billigflüge"], ["ca", "Cheap Flights"], ["gb", "Flights"], ["us", "Cheap Flights"], ["es", "Vuelos baratos"], ["mx", "Vuelos baratos"], ["ar", "Vuelos baratos"], ["fi", "Halvat Lennot"]],
  [["fr", "Vol pas cher"], ["it", "Voli low cost"], ["no", "Billige flybilletter"], ["nl", "Goedkope vliegtickets"], ["br", "Passagens aéreas"], ["pt", "Voos baratos"], ["ru", "Авиабилеты"], ["se", "Flygresor"]],
];
const links = ["About Us", "Let's Open Our World", "Jobs", "Trainee Programme", "Press", "Affiliate", "Terms of Use", "Privacy Policy", "Cookies", "Airlines", "Apps", "Help"];

export default function App() {
  return (
    <>
      <GlobalStyle />
      <Header>
        <Logo href="#" aria-label="momondo"><Wordmark /></Logo>
        <Nav>
          {["Flights", "Hotel", "Car Rental", "Trip Finder", "Inspiration"].map((n, i) => <NavLink key={n} href="#" $active={i === 0}>{n}</NavLink>)}
        </Nav>
        <HeaderTools>
          <Flag code="us" /><Currency>(USD)</Currency>
          <a href="#">Log in</a><CircleUserRound size={16} strokeWidth={1.5} />
        </HeaderTools>
      </Header>
      <SearchForm onSubmit={(e) => e.preventDefault()}>
        <SearchMain>
          <Fields>
            <PlaceField><PinLetter letter="A" /><input aria-label="From" defaultValue="Orlando, Orlando Intl (MCO), ..." /></PlaceField>
            <Swap type="button" aria-label="Swap airports"><ArrowLeftRight size={12} strokeWidth={3} /></Swap>
            <PlaceField><PinLetter letter="B" /><input aria-label="To" defaultValue="Glasgow (GLA), United Kingdom" /></PlaceField>
            <span />
            <DateField><CalendarArrowUp size={11} strokeWidth={1.5} /><input aria-label="Depart" defaultValue="6 May" /></DateField>
            <span />
            <DateField><CalendarArrowDown size={11} strokeWidth={1.5} /><input aria-label="Return" defaultValue="14 May" /><X size={8} color="#d2603a" /></DateField>
            <span />
            <Field><Users size={12} strokeWidth={1.5} /><select aria-label="Passengers"><option>1 Passenger</option></select><ChevronDown size={8} strokeWidth={4} /></Field>
          </Fields>
          <Options>
            <RefreshCw size={11} strokeWidth={3} />
            <OptionPick>Trip type: <select><option>Return trip</option></select></OptionPick>
            <OptionIcon><ChevronDown size={7} strokeWidth={4} /></OptionIcon>
            <FaTicketAlt size={11} />
            <OptionPick>Ticket class: <select><option>Economy</option></select></OptionPick>
            <OptionIcon><ChevronDown size={7} strokeWidth={4} /></OptionIcon>
            <OptionCheck><input type="checkbox" />Direct preferred</OptionCheck>
            <OptionCheck><input type="checkbox" />Include nearby airports</OptionCheck>
          </Options>
        </SearchMain>
        <SearchButton type="submit">Search</SearchButton>
      </SearchForm>
      <ChartSection>
        <ChartTitle>Estimated prices</ChartTitle>
        <Charts>
          <Chart data={outbound} tick />
          <Axis><span>480</span><span>240</span><span>0</span></Axis>
          <Chart data={inbound} />
        </Charts>
      </ChartSection>
      <Columns>
        <Filters />
        <div>
          <TabRow>
            <Tab type="button" $bg="#cd4587" $color="#fbe6f0"><TicketsIcon size={15} strokeWidth={1.3} />Tickets</Tab>
            <Tab type="button" $bg="#136784" $color="#96a3ad"><CalendarClock size={15} strokeWidth={1.3} />Timetable</Tab>
          </TabRow>
          <SortRow>
            <SortTab type="button" $on><h3>Cheapest</h3><p>747 <small>USD</small></p>16h 19m (Average)<CoinMark /></SortTab>
            <SortTab type="button"><h3>Quickest</h3><p>1,889 <small>USD</small></p>8h 20m (Average)<WatchMark /></SortTab>
            <SortTab type="button"><h3>Best</h3><p>974 <small>USD</small></p>9h 45m (Average)<GrinMark /></SortTab>
          </SortRow>
          <TripCard trip={firstTrip} />
          <Banner>
            <BannerLogo><BritishLogo /></BannerLogo>
            <BannerText>
              <h3><b>British Airways</b> has another <b>12</b> similar results</h3>
              We've grouped them all together to save you some scrolling.
              <BannerButton type="button">See all 13 results</BannerButton>
            </BannerText>
          </Banner>
          {trips.map((t, i) => <TripCard key={i} trip={t} />)}
          <Pager>
            <span>Page 1 of 160</span>
            <PageLink href="#" $on>1</PageLink><PageLink href="#">2</PageLink><PageLink href="#">3</PageLink>
            <PageLink href="#">...</PageLink><PageLink href="#" $wide>160</PageLink><PageLink href="#">›</PageLink>
          </Pager>
          <BottomAds />
        </div>
        <SideAds />
      </Columns>
      <Directory>
        <div>
          <DirTitle>Top Countries</DirTitle>
          <ul>{countries.map((c) => <Place key={c}><FaGlobeAmericas /><a href="#">Flights to <b>{c}</b></a></Place>)}</ul>
        </div>
        <div>
          <DirTitle>Top Cities</DirTitle>
          <ul>{cities.map(([c, n]) => <Place key={c}><FaMapMarkerAlt /><a href="#">Flights to <b>{c}</b><span>, {n}</span></a></Place>)}</ul>
        </div>
        <div>
          <DirTitle>International sites</DirTitle>
          <SiteCols>
            {sites.map((col, i) => <ul key={i}>{col.map(([f, t]) => <Site key={f}><Flag code={f} /><a href="#">{t}</a></Site>)}</ul>)}
          </SiteCols>
        </div>
      </Directory>
      <Newsletter>
        <div>
          <h3>Where will you go next? Let us help inspire you ...</h3>
          <p>Sign up to our newsletter for travel tips and tools that open your world and help you travel smarter.</p>
        </div>
        <SignUp type="button">Sign me up!</SignUp>
      </Newsletter>
      <BaseFooter>
        <Burst size={25} colors={brightRays} />
        <div>
          <BaseLinks>{links.map((l) => <li key={l}><a href="#">{l}</a></li>)}</BaseLinks>
          <Tagline>momondo.com is a free, independent global travel search site comparing billions of cheap flights, hotels and car hire deals</Tagline>
        </div>
        <Social>
          <a href="#" aria-label="Twitter"><FaTwitter size={10} /></a>
          <a href="#" aria-label="Facebook"><FaFacebookF size={10} /></a>
          <a href="#" aria-label="Google Plus"><FaGooglePlusG size={11} /></a>
        </Social>
      </BaseFooter>
    </>
  );
}
